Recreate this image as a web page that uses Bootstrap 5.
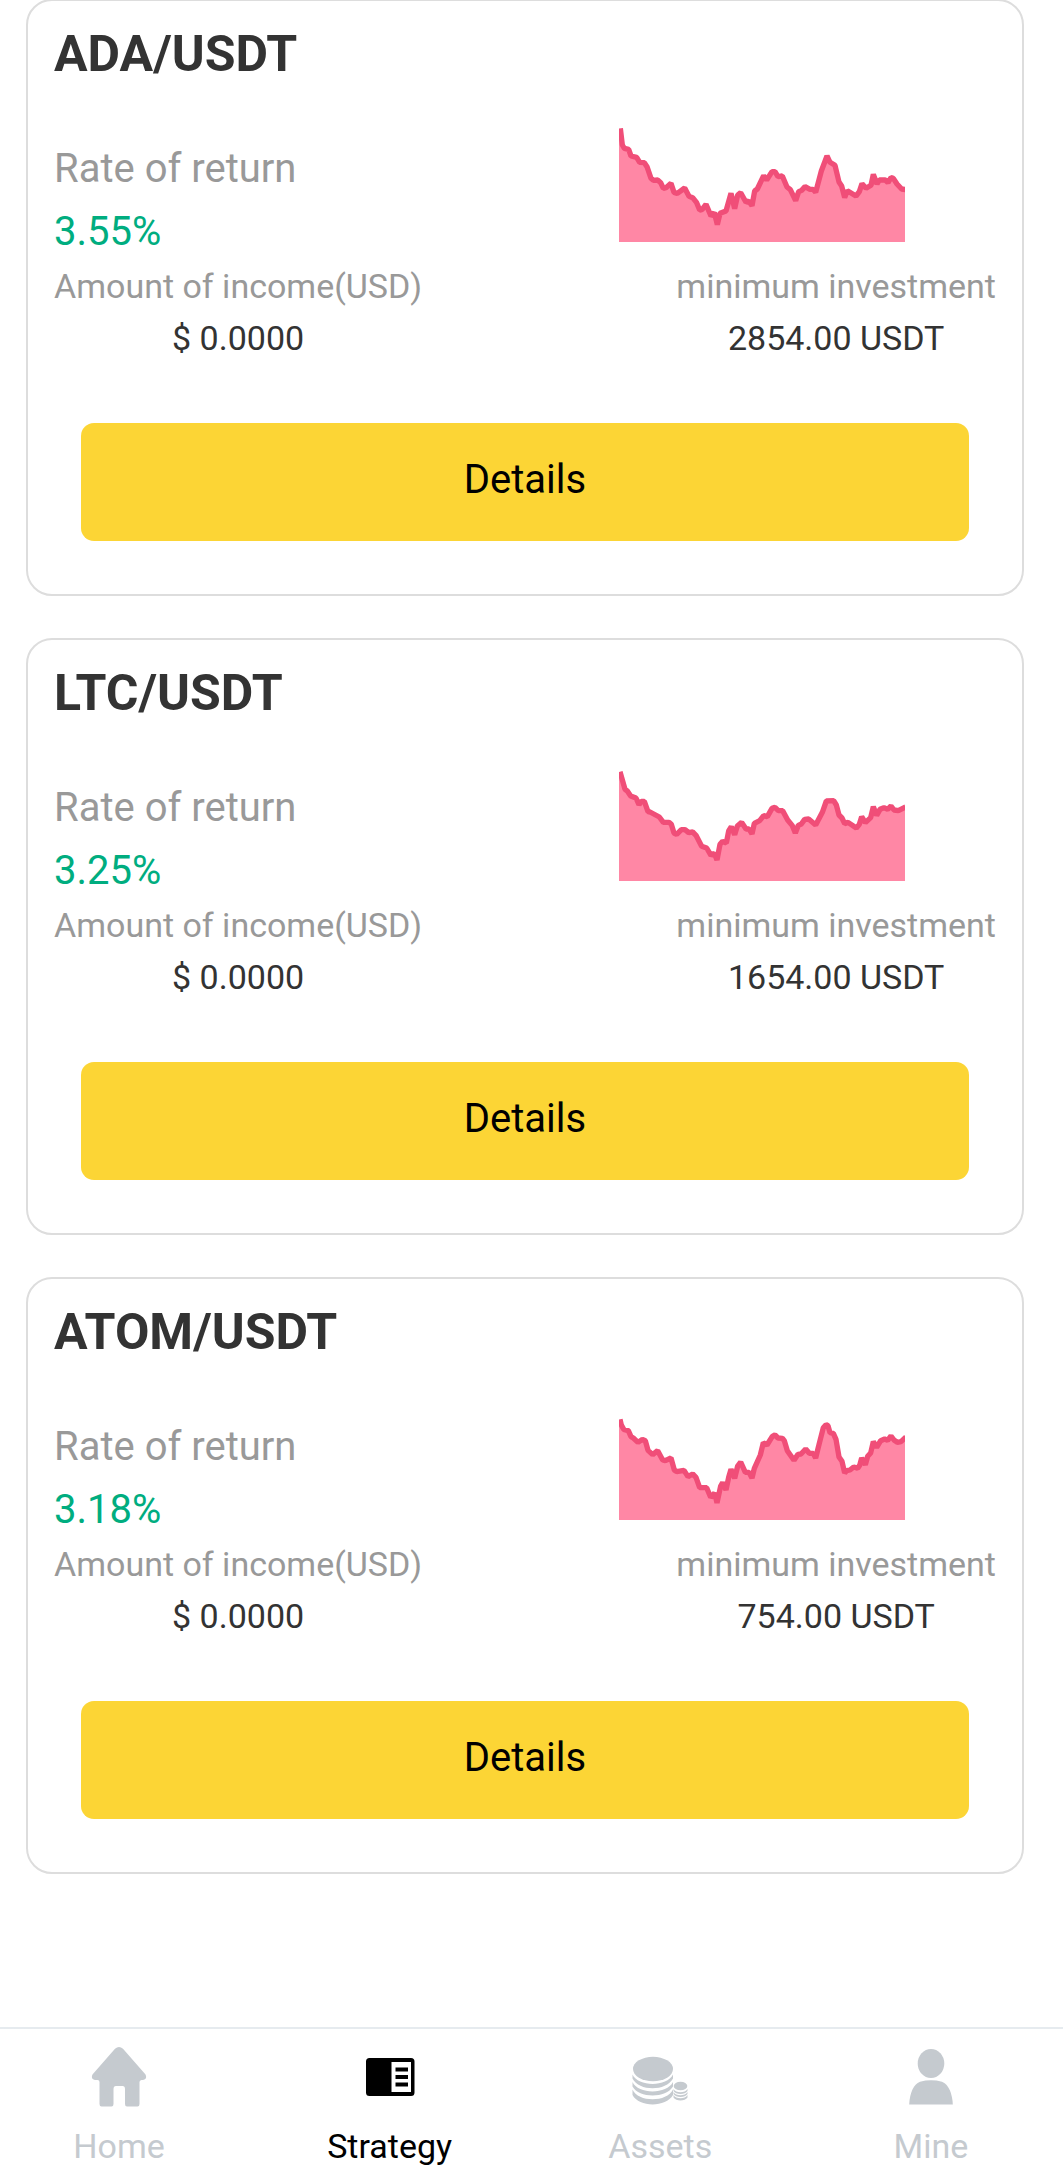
<!DOCTYPE html>
<html lang="en">
<head>
<meta charset="utf-8">
<meta name="viewport" content="width=device-width, initial-scale=1">
<title>Strategy</title>
<link href="https://cdn.jsdelivr.net/npm/bootstrap@5.3.0/dist/css/bootstrap.min.css" rel="stylesheet">
<style>
  body { font-family: Roboto, sans-serif; color: #333; background: #fff; }
  .strategy-list { gap: 42px; margin-top: -1px; padding: 0 39px 40px 26px; }
  .strategy-card { border: 2px solid #ddd; border-radius: 26px; padding: 23px 26px 53px; }
  .pair-name { font-size: 50px; line-height: 60px; margin-bottom: 36px; }
  .rate-block { font-size: 40px; line-height: 56px; gap: 7px; }
  .rate-value { color: #00ad7f; }
  .muted-text { color: #999; }
  .trend { width: 286px; height: 122px; margin: 0 91px 18px 0; }
  .trend .fill-area { fill: #ff87a5; }
  .trend .top-line { fill: none; stroke: #f04e78; stroke-width: 16; stroke-linejoin: bevel; }
  .figures { font-size: 34px; line-height: 52px; }
  .btn-details { --bs-btn-bg: #fcd535; --bs-btn-color: #000; --bs-btn-hover-bg: #f2c91f; --bs-btn-hover-color: #000;
    --bs-btn-border-width: 0; --bs-btn-border-radius: 13px; --bs-btn-font-size: 40px; --bs-btn-line-height: 60px;
    --bs-btn-padding-y: 27px; margin: 59px 27px 0; padding-bottom: 31px; }
  .tab-strip { border-top: 2px solid #e6ebef; padding: 18px 13px 11px 0; }
  .tab-item { width: 238px; font-size: 34px; line-height: 52px; color: #c5cacf; gap: 13px; }
  .tab-item.active { color: #000; }
  .tab-item svg { width: 60px; height: 60px; fill: currentColor; }
</style>
</head>
<body>
<div class="d-flex flex-column min-vh-100">
  <main class="strategy-list d-flex flex-column">

    <section class="strategy-card d-flex flex-column">
      <h2 class="pair-name fw-bold mt-0">ADA/USDT</h2>
      <div class="d-flex justify-content-between align-items-end">
        <div class="rate-block d-flex flex-column">
          <div class="muted-text">Rate of return</div>
          <div class="rate-value">3.55%</div>
        </div>
        <svg class="trend" viewBox="27 0 858 366" aria-hidden="true">
          <path class="fill-area" d="M27 366V40L37 75L43 85L56 88L63 108L80 112L89 127L103 128L111 140L123 175L130 181L143 180L152 188L160 205L168 203L183 190L192 217L202 220L224 204L237 229L248 233L260 248L269 270L276 269L288 253L303 285L313 281L322 311L330 280L348 273L363 222L374 263L383 225L392 218L408 247L416 243L426 255L434 213L442 207L461 167L470 180L486 155L495 155L504 170L517 168L531 201L541 209L557 240L566 215L575 211L585 200L600 208L609 208L617 215L634 153L651 110L660 127L675 136L687 186L695 198L704 231L712 212L738 228L748 215L756 193L768 205L783 196L790 165L801 190L808 180L826 180L834 188L843 173L850 175L861 192L875 207L885 209V366Z"/>
          <path class="top-line" d="M31 25L37 75L43 85L56 88L63 108L80 112L89 127L103 128L111 140L123 175L130 181L143 180L152 188L160 205L168 203L183 190L192 217L202 220L224 204L237 229L248 233L260 248L269 270L276 269L288 253L303 288L313 278L322 314L330 280L348 273L363 220L374 266L383 225L392 218L408 247L416 243L426 257L434 213L442 207L461 167L470 180L486 155L495 155L504 170L517 168L531 201L541 209L557 242L566 215L575 211L585 200L600 208L609 208L617 217L634 153L651 108L660 127L675 136L687 186L695 198L704 233L712 212L738 228L748 215L756 191L768 205L783 196L790 163L801 192L808 180L826 180L834 188L843 173L850 175L861 192L875 207L888 209"/>
        </svg>
      </div>
      <div class="figures d-flex justify-content-between text-center">
        <div><div class="muted-text">Amount of income(USD)</div><div>$ 0.0000</div></div>
        <div><div class="muted-text">minimum investment</div><div>2854.00 USDT</div></div>
      </div>
      <button type="button" class="btn btn-details">Details</button>
    </section>

    <section class="strategy-card d-flex flex-column">
      <h2 class="pair-name fw-bold mt-0">LTC/USDT</h2>
      <div class="d-flex justify-content-between align-items-end">
        <div class="rate-block d-flex flex-column">
          <div class="muted-text">Rate of return</div>
          <div class="rate-value">3.25%</div>
        </div>
        <svg class="trend" viewBox="27 -3 858 366" aria-hidden="true">
          <path class="fill-area" d="M27 363V40L45 88L52 93L62 108L78 114L87 136L94 124L103 124L114 155L120 156L148 171L160 187L177 187L184 193L192 219L200 223L214 209L225 209L236 218L248 216L258 226L275 259L290 264L303 286L313 283L321 298L330 253L338 244L349 247L356 213L364 202L374 223L382 198L395 187L408 207L417 207L426 220L433 190L449 182L461 167L472 170L486 145L495 142L505 152L518 152L533 180L547 197L556 217L565 196L574 192L584 178L596 177L617 195L637 157L649 123L671 122L679 135L687 165L696 174L704 191L714 187L739 204L748 193L755 172L766 188L782 173L790 142L800 165L810 148L822 143L833 148L843 138L852 150L865 152L885 142V363Z"/>
          <path class="top-line" d="M30 35L45 88L52 93L62 108L78 114L87 134L94 124L103 124L114 155L120 156L148 171L160 187L177 187L184 193L192 219L200 223L214 209L225 209L236 218L248 216L258 226L275 259L290 264L303 286L313 280L321 300L330 253L338 244L349 249L356 213L364 200L374 224L382 198L395 187L408 207L417 207L426 222L433 190L449 182L461 167L472 170L486 145L495 142L505 152L518 152L533 180L547 197L556 219L565 196L574 192L584 178L596 177L617 195L637 157L649 123L671 122L679 135L687 165L696 174L704 191L714 187L739 204L748 193L755 170L766 188L782 173L790 140L800 166L810 148L822 143L833 148L843 138L852 150L865 152L887 141"/>
        </svg>
      </div>
      <div class="figures d-flex justify-content-between text-center">
        <div><div class="muted-text">Amount of income(USD)</div><div>$ 0.0000</div></div>
        <div><div class="muted-text">minimum investment</div><div>1654.00 USDT</div></div>
      </div>
      <button type="button" class="btn btn-details">Details</button>
    </section>

    <section class="strategy-card d-flex flex-column">
      <h2 class="pair-name fw-bold mt-0">ATOM/USDT</h2>
      <div class="d-flex justify-content-between align-items-end">
        <div class="rate-block d-flex flex-column">
          <div class="muted-text">Rate of return</div>
          <div class="rate-value">3.18%</div>
        </div>
        <svg class="trend" viewBox="27 -6 858 366" aria-hidden="true">
          <path class="fill-area" d="M27 360V65L41 88L55 92L63 110L70 114L84 127L97 118L106 122L114 151L128 164L143 152L158 180L166 182L183 174L193 210L200 215L222 211L234 230L248 222L258 232L269 263L290 263L302 292L314 280L321 306L332 258L338 250L348 268L356 232L363 210L374 233L383 198L392 186L406 217L417 217L426 232L433 205L451 165L460 130L471 135L487 109L495 105L504 114L517 115L523 122L532 152L552 181L564 163L573 162L587 147L598 160L610 160L617 172L627 134L640 83L648 74L654 77L660 98L670 100L678 118L687 171L696 184L704 219L710 212L720 210L731 201L743 205L749 196L755 176L766 194L773 169L782 159L790 127L800 142L812 122L824 117L833 121L843 108L852 120L862 127L873 125L885 113V360Z"/>
          <path class="top-line" d="M30 58L34 75L41 88L55 92L63 110L70 114L84 127L97 118L106 122L114 151L128 164L143 152L158 180L166 182L183 174L193 210L200 215L222 211L234 230L248 222L258 232L269 263L290 263L302 292L314 279L321 309L332 258L338 248L348 270L356 232L363 208L374 235L383 198L392 186L406 217L417 217L426 234L433 205L451 165L460 128L471 135L487 109L495 105L504 114L517 115L523 122L532 152L552 181L564 163L573 162L587 147L598 160L610 160L617 174L627 134L640 83L648 74L654 77L660 98L670 100L678 118L687 171L696 184L704 219L710 212L720 210L731 201L743 205L749 196L755 174L766 194L773 169L782 159L790 125L800 142L812 122L824 117L833 121L843 108L852 120L862 127L873 125L888 111"/>
        </svg>
      </div>
      <div class="figures d-flex justify-content-between text-center">
        <div><div class="muted-text">Amount of income(USD)</div><div>$ 0.0000</div></div>
        <div><div class="muted-text">minimum investment</div><div>754.00 USDT</div></div>
      </div>
      <button type="button" class="btn btn-details">Details</button>
    </section>
  </main>

  <nav class="tab-strip d-flex justify-content-between mt-auto" aria-label="Main">
    <a href="#" class="tab-item d-flex flex-column align-items-center text-decoration-none">
      <svg viewBox="0 0 60 60" aria-hidden="true"><path d="M26 1.8Q30-1.6 34 1.8L56.5 27.500Q58.500 32 54 33H52.500Q50.500 33.300 50.500 35V57Q50.500 59.500 48.500 59.500H38Q36 59.500 36 57V42Q36 39 33.500 39H27Q24.500 39 24.500 42V57Q24.500 59.500 22.500 59.500H12.500Q10.500 59.500 10.500 57V35Q10.500 33 8.500 33H6Q1.500 32 3.500 27.500Z"/></svg>
      <span>Home</span>
    </a>
    <a href="#" class="tab-item active d-flex flex-column align-items-center text-decoration-none" aria-current="page">
      <svg viewBox="0 0 60 60" aria-hidden="true"><path fill-rule="evenodd" d="M9.500 11H51Q54.500 11 54.500 14.500V45.500Q54.500 49 51 49H9.500Q6 49 6 45.500V14.500Q6 11 9.500 11ZM31.500 15V45H51V15ZM35.500 20.500H48V24.500H35.500ZM35.500 28H48V32H35.500ZM35.500 35.500H48V39.500H35.500Z"/></svg>
      <span>Strategy</span>
    </a>
    <a href="#" class="tab-item d-flex flex-column align-items-center text-decoration-none">
      <svg viewBox="0 0 60 60" aria-hidden="true"><ellipse cx="23" cy="22" rx="20" ry="12.300"/><path d="M2.500 27.500C8 40 37 40 43 27.500V31.500C36 44.500 9 44.500 2.500 31.500ZM2.500 35C8 47.500 37 47.500 43 35V39.500C36 51.500 9 51.500 2.500 39.500ZM2.500 42.500C8 55.500 37 55.500 43 42.500V48C36 60.500 9 60.500 2.500 48Z"/><ellipse cx="50.500" cy="39" rx="6.800" ry="4.300"/><path d="M43.500 42C46 46.300 55 46.300 57.500 42V44C55 48 46 48 43.500 44ZM43.500 45C46 49.300 55 49.300 57.500 45V47C55 51 46 51 43.500 47ZM43.500 48C46 52.300 55 52.300 57.500 48V50.500C55 54.500 46 54.500 43.500 50.500Z"/></svg>
      <span>Assets</span>
    </a>
    <a href="#" class="tab-item d-flex flex-column align-items-center text-decoration-none">
      <svg viewBox="0 0 60 60" aria-hidden="true"><ellipse cx="30" cy="16.500" rx="13.300" ry="14.500"/><path d="M8.200 57.500C8.700 46 12.500 37 19 34.700Q30 31.800 41 34.700C47.500 37 51.500 47 51.800 57.500Z"/></svg>
      <span>Mine</span>
    </a>
  </nav>
</div>
<script src="https://cdn.jsdelivr.net/npm/bootstrap@5.3.0/dist/js/bootstrap.bundle.min.js"></script>
</body>
</html>
